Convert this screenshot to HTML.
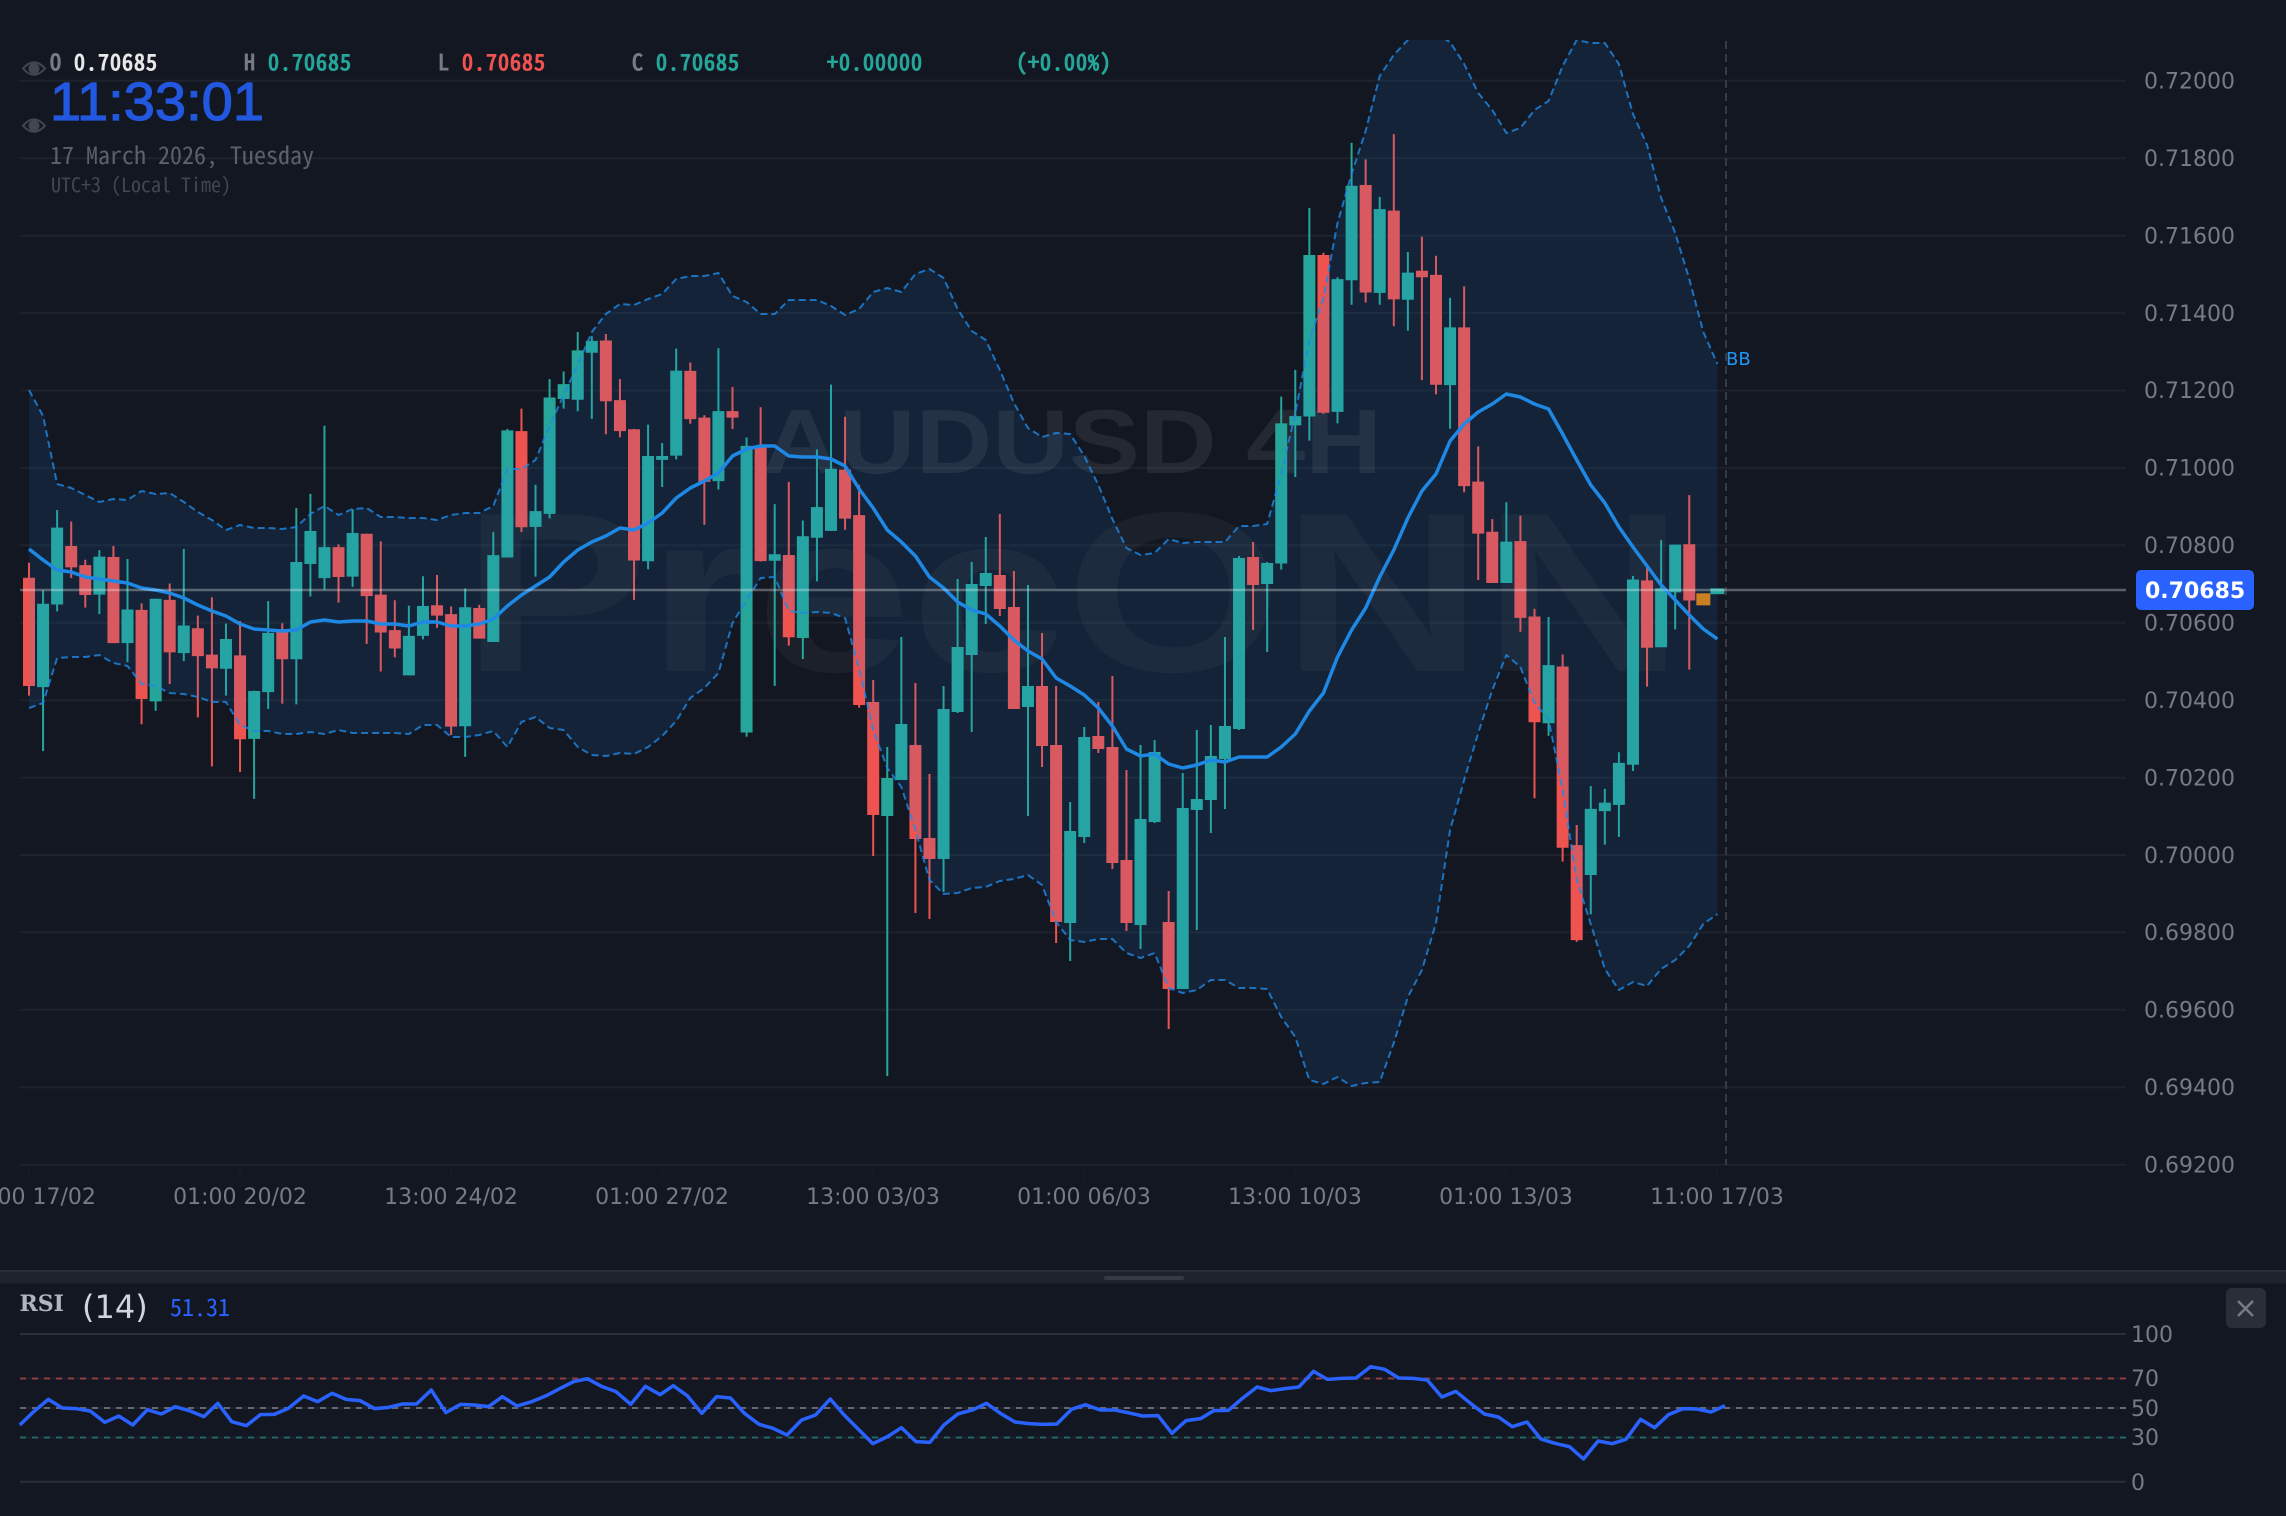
<!DOCTYPE html>
<html><head><meta charset="utf-8"><title>AUDUSD 4H</title>
<style>
html,body{margin:0;padding:0;background:#131722;width:2286px;height:1516px;overflow:hidden}
svg{display:block}
.m{font-family:"Noto Sans Mono CJK JP","Noto Sans Mono CJK SC","Noto Sans Mono",monospace}
.d{font-family:"DejaVu Sans",sans-serif}
.w path,.l path{fill:none;vector-effect:non-scaling-stroke}
.gw{stroke:#26a69a;stroke-width:2}.gb{stroke:#26a69a;stroke-width:12}
.rw{stroke:#ef5350;stroke-width:2}.rb{stroke:#ef5350;stroke-width:12}
.ax{font-size:22px;fill:#787b86}
</style></head><body>
<svg xmlns="http://www.w3.org/2000/svg" width="2286" height="1516" viewBox="0 0 2286 1516">
<defs><clipPath id="c"><rect x="0" y="40" width="2286" height="1125"/></clipPath></defs>
<rect width="2286" height="1516" fill="#131722"/>
<path d="M20 80.8H2126M20 158.2H2126M20 235.6H2126M20 313.1H2126M20 390.5H2126M20 467.9H2126M20 545.3H2126M20 622.7H2126M20 700.2H2126M20 777.6H2126M20 855H2126M20 932.4H2126M20 1009.8H2126M20 1087.3H2126M20 1164.7H2126" stroke="#1e222d" stroke-width="2" fill="none"/>
<path d="M29 1166V1180M240 1166V1180M451 1166V1180M662 1166V1180M873 1166V1180M1084 1166V1180M1295 1166V1180M1506 1166V1180M1717 1166V1180" stroke="#161a25" stroke-width="2"/>
<g font-family="Liberation Sans, sans-serif" font-weight="700">
<text x="762" y="473" font-size="91" textLength="620" lengthAdjust="spacingAndGlyphs" fill="#fff" fill-opacity=".075">AUDUSD 4H</text>
<text x="462" y="671" font-size="228" textLength="1222" lengthAdjust="spacingAndGlyphs" fill="#fff" fill-opacity=".04">PrecONN</text>
</g>
<g clip-path="url(#c)">
<g class="w" transform="matrix(14.07 0 0 .3827 29 200)">
<path class="gw" d="M1 1020V1440M2 810V1075M5 915V1082M7 938V1208M9 1042V1335M11 912V1205M14 1107V1295M16 1282V1565M17 1048V1330M19 805V1318M20 768V1036M21 590V1018M23 808V1011M27 1060V1242M28 983V1148M31 1015V1455M33 868V1155M34 598V934M36 744V984M37 468V832M38 448V545M39 345V552M40 356V572M44 587V965M45 635V750M46 388V678"/>
<path class="gb" d="M1 1055V1273M2 856V1057M5 932V1031M7 1070V1158M9 1042V1310M11 1112V1184M14 1147V1225M16 1283V1408M17 1131V1286M19 946V1200M20 865V951M21 907V988M23 870V984M27 1139V1242M28 1061V1139M31 1064V1375M33 928V1155M34 602V934M36 813V854M37 516V820M38 481V520M39 393V522M40 368V399M44 669V944M45 669V679M46 446V668"/>
<path class="rw" d="M0 948V1295M3 840V988M4 940V1065M6 904V1158M8 1054V1370M10 1002V1265M12 1086V1352M13 1038V1480M15 1100V1495M18 1106V1316M22 900V1052M24 872V1160M25 892V1232M26 1046V1195M29 980V1118M30 1062V1398M32 1058V1146M35 545V868M41 350V612M42 468V620M43 598V1045"/>
<path class="rb" d="M0 987V1270M3 904V960M4 954V1032M6 933V1158M8 1071V1304M10 1045V1182M12 1119V1192M13 1188V1224M15 1190V1409M18 1121V1200M22 907V985M24 872V1035M25 1031V1130M26 1124V1172M29 1059V1086M30 1082V1376M32 1066V1146M35 604V855M41 367V526M42 523V604M43 599V942"/>
</g>
<g class="w" transform="matrix(14.07 0 0 .3827 29 240)">
<path class="gw" d="M49 283V652M51 516V1298M53 690V1165M55 733V1095M56 547V892M57 378V760"/>
<path class="gb" d="M49 447V630M51 538V1287M53 821V838M55 774V1040M56 698V778M57 598V760"/>
<path class="rw" d="M47 320V480M48 458V744M50 384V494M52 437V840M54 632V1060M58 462V757M59 640V1222"/>
<path class="rb" d="M47 342V468M48 464V632M50 447V464M52 541V839M54 823V1038M58 600V728M59 719V1215"/>
</g>
<g class="w" transform="matrix(14.07 0 0 1 29 0)">
<path class="gw" d="M61 747V1076M62 637V780M65 686V892M66 579V713M67 562V732M68 537V624M71 585V816M74 802V961M75 727V843M79 745V949M80 740V823M82 773V989M83 730V930M84 725V833M85 637V809M86 556V730M88 562V652"/>
<path class="gb" d="M61 778V816M62 724V780M65 709V859M66 647V712M67 584V655M68 573V586M71 686V707M74 831V923M75 737V837M79 819V925M80 752V822M82 808V989M83 799V810M84 756V800M85 726V759M86 558V729M88 563V584"/>
<path class="rw" d="M60 680V856M63 683V913M64 774V919M69 514V616M70 571V709M72 633V767M73 686V943M76 702V753M77 676V869M78 770V931M81 891V1029M87 542V630"/>
<path class="rb" d="M60 702V815M63 745V839M64 838V859M69 575V609M70 607V709M72 686V746M73 745V922M76 736V749M77 747V863M78 860V923M81 922V989M87 557V585"/>
</g>
<g class="w" transform="matrix(14.07 0 0 .3827 29 30)">
<path class="gw" d="M89 958V1410M90 888V1168M91 465V1073M93 646V1028M94 295V718M96 436V718M98 580V786M101 700V1042M105 1234V1445"/>
<path class="gb" d="M89 1028V1394M90 1009V1033M91 588V1010M93 651V998M94 407V654M96 468V687M98 634V705M101 777V928M105 1337V1445"/>
<path class="rw" d="M92 582V1003M95 338V712M97 272V774M99 540V915M100 590V952M102 670V1208M103 1088V1437M104 1278V1445"/>
<path class="rb" d="M92 588V1000M95 405V686M97 472V704M99 629V646M100 640V927M102 777V1192M103 1180V1316M104 1311V1445"/>
</g>
<g class="w" transform="matrix(14.07 0 0 .4464 29 500)">
<path class="gw" d="M108 262V528M111 641V928M112 647V772M113 565V755M114 170V607M116 90V330M117 100V290"/>
<path class="gb" d="M108 370V500M111 692V840M112 678V697M113 589V683M114 178V593M116 198V330M117 100V207"/>
<path class="rw" d="M106 35V295M107 244V668M109 346V810M110 728V990M115 145V418M118 -11V380"/>
<path class="rb" d="M106 92V264M107 261V498M109 373V779M110 773V986M115 180V331M118 99V225"/>
<path d="M119 209V236" stroke="#de7d0c" stroke-width="14"/>
<path d="M120 198V211" stroke="#26a69a" stroke-width="14"/>
</g>
<g transform="matrix(14.07 0 0 1 29 0)">
<path fill="#2196f3" fill-opacity=".1" fill-rule="evenodd" d="M0 390 1 416 2 484 3 488 4 495 5 502 6 499 7 500 8 491 9 494 10 493 11 502 12 512 13 520 14 530 15 525 16 528 17 528 18 529 19 527 20 514 21 506 22 515 23 509 24 508 25 517 26 517 27 518 28 518 29 520 30 515 31 513 32 513 33 506 34 469 35 469 36 460 37 426 38 395 39 365 40 332 41 314 42 304 43 305 44 299 45 294 46 279 47 276 48 276 49 273 50 296 51 302 52 314 53 314 54 300 55 300 56 300 57 306 58 315 59 309 60 292 61 288 62 292 63 274 64 269 65 278 66 309 67 331 68 340 69 370 70 403 71 428 72 437 73 433 74 434 75 456 76 485 77 519 78 548 79 555 80 553 81 539 82 543 83 542 84 542 85 542 86 526 87 526 88 524 89 474 90 413 91 340 92 298 93 223 94 174 95 131 96 76 97 55 98 40 99 34 100 34 101 42 102 64 103 93 104 110 105 133 106 128 107 110 108 101 109 66 110 40 111 43 112 43 113 64 114 114 115 145 116 198 117 233 118 279 119 332 120 364 120 1400 0 1400ZM0 708 1 703 2 658 3 657 4 657 5 655 6 663 7 666 8 684 9 686 10 693 11 694 12 697 13 702 14 702 15 725 16 731 17 731 18 734 19 734 20 732 21 734 22 730 23 733 24 733 25 733 26 733 27 734 28 725 29 725 30 737 31 737 32 735 33 731 34 747 35 722 36 717 37 728 38 730 39 747 40 755 41 756 42 753 43 754 44 747 45 736 46 721 47 698 48 688 49 673 50 623 51 600 52 578 53 577 54 611 55 613 56 612 57 613 58 618 59 669 60 730 61 768 62 787 63 830 64 880 65 894 66 893 67 888 68 887 69 881 70 879 71 875 72 885 73 922 74 940 75 942 76 939 77 939 78 953 79 958 80 953 81 988 82 993 83 990 84 980 85 980 86 988 87 988 88 989 89 1017 90 1037 91 1080 92 1084 93 1077 94 1086 95 1083 96 1082 97 1043 98 997 99 970 100 923 101 830 102 780 103 733 104 690 105 655 106 667 107 703 108 719 109 790 110 880 111 924 112 969 113 990 114 982 115 986 116 969 117 960 118 946 119 924 120 914 120 1400 0 1400Z"/>
</g>
<g class="l" transform="matrix(14.07 0 0 1 29 0)">
<path stroke="#1e88e5" stroke-opacity=".8" stroke-width="2" stroke-dasharray="7 4" stroke-linejoin="round" d="M0 390 1 416 2 484 3 488 4 495 5 502 6 499 7 500 8 491 9 494 10 493 11 502 12 512 13 520 14 530 15 525 16 528 17 528 18 529 19 527 20 514 21 506 22 515 23 509 24 508 25 517 26 517 27 518 28 518 29 520 30 515 31 513 32 513 33 506 34 469 35 469 36 460 37 426 38 395 39 365 40 332 41 314 42 304 43 305 44 299 45 294 46 279 47 276 48 276 49 273 50 296 51 302 52 314 53 314 54 300 55 300 56 300 57 306 58 315 59 309 60 292 61 288 62 292 63 274 64 269 65 278 66 309 67 331 68 340 69 370 70 403 71 428 72 437 73 433 74 434 75 456 76 485 77 519 78 548 79 555 80 553 81 539 82 543 83 542 84 542 85 542 86 526 87 526 88 524 89 474 90 413 91 340 92 298 93 223 94 174 95 131 96 76 97 55 98 40 99 34 100 34 101 42 102 64 103 93 104 110 105 133 106 128 107 110 108 101 109 66 110 40 111 43 112 43 113 64 114 114 115 145 116 198 117 233 118 279 119 332 120 364"/>
<path stroke="#1e88e5" stroke-opacity=".8" stroke-width="2" stroke-dasharray="7 4" stroke-linejoin="round" d="M0 708 1 703 2 658 3 657 4 657 5 655 6 663 7 666 8 684 9 686 10 693 11 694 12 697 13 702 14 702 15 725 16 731 17 731 18 734 19 734 20 732 21 734 22 730 23 733 24 733 25 733 26 733 27 734 28 725 29 725 30 737 31 737 32 735 33 731 34 747 35 722 36 717 37 728 38 730 39 747 40 755 41 756 42 753 43 754 44 747 45 736 46 721 47 698 48 688 49 673 50 623 51 600 52 578 53 577 54 611 55 613 56 612 57 613 58 618 59 669 60 730 61 768 62 787 63 830 64 880 65 894 66 893 67 888 68 887 69 881 70 879 71 875 72 885 73 922 74 940 75 942 76 939 77 939 78 953 79 958 80 953 81 988 82 993 83 990 84 980 85 980 86 988 87 988 88 989 89 1017 90 1037 91 1080 92 1084 93 1077 94 1086 95 1083 96 1082 97 1043 98 997 99 970 100 923 101 830 102 780 103 733 104 690 105 655 106 667 107 703 108 719 109 790 110 880 111 924 112 969 113 990 114 982 115 986 116 969 117 960 118 946 119 924 120 914"/>
<path stroke="#1e88e5" stroke-width="3.5" stroke-linejoin="round" d="M0 549 1 560 2 570 3 572 4 577 5 579 6 581 7 583 8 588 9 590 10 593 11 598 12 605 13 611 14 616 15 624 16 629 17 630 18 631 19 630 20 622 21 620 22 622 23 621 24 621 25 624 26 624 27 626 28 622 29 622 30 626 31 626 32 624 33 619 34 606 35 595 36 586 37 577 38 562 39 550 40 542 41 536 42 528 43 530 44 523 45 513 46 498 47 488 48 481 49 473 50 456 51 449 52 446 53 446 54 456 55 457 56 457 57 459 58 466 59 489 60 508 61 530 62 542 63 556 64 577 65 588 66 602 67 610 68 614 69 626 70 640 71 651 72 659 73 678 74 686 75 695 76 708 77 726 78 749 79 756 80 754 81 764 82 768 83 765 84 760 85 762 86 757 87 757 88 757 89 747 90 734 91 711 92 693 93 657 94 630 95 608 96 577 97 550 98 518 99 491 100 474 101 441 102 424 103 412 104 404 105 394 106 397 107 404 108 409 109 434 110 460 111 485 112 503 113 527 114 547 115 566 116 585 117 600 118 615 119 629 120 639"/>
</g>
</g>
<path d="M1726 41V1165" stroke="#363a45" stroke-width="2" stroke-dasharray="8 5" fill="none"/>
<path d="M20 590H2126" stroke="#fff" stroke-opacity=".3" stroke-width="2.5" fill="none"/>
<text class="d" x="1726" y="365" font-size="18" fill="#2196f3">BB</text>
<g class="d ax">
<text x="2144" y="88.5">0.72000</text><text x="2144" y="166">0.71800</text><text x="2144" y="243.5">0.71600</text><text x="2144" y="321">0.71400</text><text x="2144" y="398">0.71200</text><text x="2144" y="475.5">0.71000</text><text x="2144" y="553">0.70800</text><text x="2144" y="630.5">0.70600</text><text x="2144" y="708">0.70400</text><text x="2144" y="785.5">0.70200</text><text x="2144" y="863">0.70000</text><text x="2144" y="940">0.69800</text><text x="2144" y="1017.5">0.69600</text><text x="2144" y="1095">0.69400</text><text x="2144" y="1172.5">0.69200</text>
</g>
<rect x="2136" y="570" width="118" height="40" rx="5" fill="#2962ff"/>
<text class="d" x="2145" y="598" font-size="22" font-weight="700" fill="#fff">0.70685</text>
<g class="d ax" text-anchor="middle">
<text x="29" y="1204">13:00 17/02</text><text x="240" y="1204">01:00 20/02</text><text x="451" y="1204">13:00 24/02</text><text x="662" y="1204">01:00 27/02</text><text x="873" y="1204">13:00 03/03</text><text x="1084" y="1204">01:00 06/03</text><text x="1295" y="1204">13:00 10/03</text><text x="1506" y="1204">01:00 13/03</text><text x="1717" y="1204">11:00 17/03</text>
</g>
<g class="m" font-size="22" letter-spacing="1" stroke-width="1">
<text x="50" y="70" fill="#787b86" stroke="#787b86">O</text><text x="74" y="70" fill="#e8e8e8" stroke="#e8e8e8">0.70685</text>
<text x="244" y="70" fill="#787b86" stroke="#787b86">H</text><text x="268" y="70" fill="#26a69a" stroke="#26a69a">0.70685</text>
<text x="438" y="70" fill="#787b86" stroke="#787b86">L</text><text x="462" y="70" fill="#ef5350" stroke="#ef5350">0.70685</text>
<text x="632" y="70" fill="#787b86" stroke="#787b86">C</text><text x="656" y="70" fill="#26a69a" stroke="#26a69a">0.70685</text>
<text x="827" y="70" fill="#26a69a" stroke="#26a69a">+0.00000</text>
<text x="1016" y="70" fill="#26a69a" stroke="#26a69a">(+0.00%)</text>
</g>
<text x="50" y="120" font-family="Liberation Sans, sans-serif" font-size="54" textLength="214" lengthAdjust="spacingAndGlyphs" fill="#2257e0" stroke="#2257e0" stroke-width="1.2">11:33:01</text>
<text class="m" x="50" y="164" font-size="24" fill="#5d606b">17 March 2026, Tuesday</text>
<text class="m" x="51" y="192" font-size="20" fill="#434651">UTC+3 (Local Time)</text>
<g fill="none" stroke="#434651" stroke-width="2">
<path d="M23 68.5Q34 56 45 68.5Q34 81 23 68.5Z"/><circle cx="34" cy="68.5" r="4.5" fill="#434651"/>
<path d="M23 125.7Q34 113 45 125.7Q34 138 23 125.7Z"/><circle cx="34" cy="125.7" r="4.5" fill="#434651"/>
</g>
<rect x="0" y="1270" width="2286" height="2" fill="#2a2e39"/>
<rect x="0" y="1272" width="2286" height="11.5" fill="#1e222d"/>
<rect x="1104" y="1276" width="80" height="4" rx="2" fill="#363a45"/>
<text x="19.5" y="1311" font-family="DejaVu Serif, serif" font-size="22" font-weight="700" fill="#b2b5be">RSI</text>
<text class="d" x="82" y="1318" font-size="32" fill="#d1d4dc">(14)</text>
<text class="m" x="170" y="1316" font-size="24" fill="#2962ff">51.31</text>
<rect x="2226" y="1288" width="40" height="40" rx="6" fill="#2a2e39"/>
<path d="M2238 1301L2253 1316M2253 1301L2238 1316" stroke="#787b86" stroke-width="2.5" fill="none"/>
<path d="M20 1334H2126M20 1481.7H2126" stroke="#2a2e39" stroke-width="2" fill="none"/>
<path d="M20 1378.5H2126M20 1408H2126M20 1437.5H2126" stroke="#1e222d" stroke-width="2" fill="none"/>
<path d="M20 1378.5H2126" stroke="#ef5350" stroke-opacity=".55" stroke-width="2" stroke-dasharray="6 6" fill="none"/>
<path d="M20 1408H2126" stroke="#787b86" stroke-opacity=".8" stroke-width="2" stroke-dasharray="6 6" fill="none"/>
<path d="M20 1437.5H2126" stroke="#26a69a" stroke-opacity=".55" stroke-width="2" stroke-dasharray="6 6" fill="none"/>
<g class="l" transform="matrix(.73341 0 0 .33333 0 1250)">
<path stroke="#2962ff" stroke-width="3.5" stroke-linejoin="round" d="M27 525 46 485 66 448 85 474 104 476 123 483 143 517 162 498 181 525 201 479 220 492 239 470 258 482 278 500 297 460 316 515 336 527 355 494 374 493 393 475 414 438 433 455 453 430 472 448 491 452 511 476 530 472 549 462 568 462 588 420 608 488 628 463 647 465 666 470 685 440 705 468 725 455 745 437 764 415 782 395 801 386 821 410 840 425 860 463 880 409 900 434 918 407 937 437 957 490 977 440 996 444 1015 490 1035 523 1054 535 1073 555 1093 510 1112 495 1132 447 1151 495 1170 537 1190 581 1210 560 1229 533 1249 575 1268 577 1287 525 1306 492 1326 480 1345 460 1364 490 1384 516 1403 521 1422 523 1441 522 1461 478 1480 464 1500 480 1520 480 1538 488 1558 498 1579 497 1598 550 1617 512 1637 506 1655 482 1675 481 1694 445 1714 411 1733 422 1752 416 1771 411 1791 364 1810 388 1829 385 1849 384 1869 350 1888 358 1907 384 1927 385 1946 390 1966 441 1985 424 2005 460 2024 492 2043 501 2062 530 2082 516 2101 567 2120 580 2140 590 2159 627 2179 573 2198 581 2217 568 2237 508 2256 533 2275 494 2295 476 2314 477 2333 486 2352 467"/>
</g>
<g class="d ax">
<text x="2131" y="1342">100</text><text x="2131" y="1386">70</text><text x="2131" y="1416">50</text><text x="2131" y="1445">30</text><text x="2131" y="1490">0</text>
</g>
</svg>
</body></html>
